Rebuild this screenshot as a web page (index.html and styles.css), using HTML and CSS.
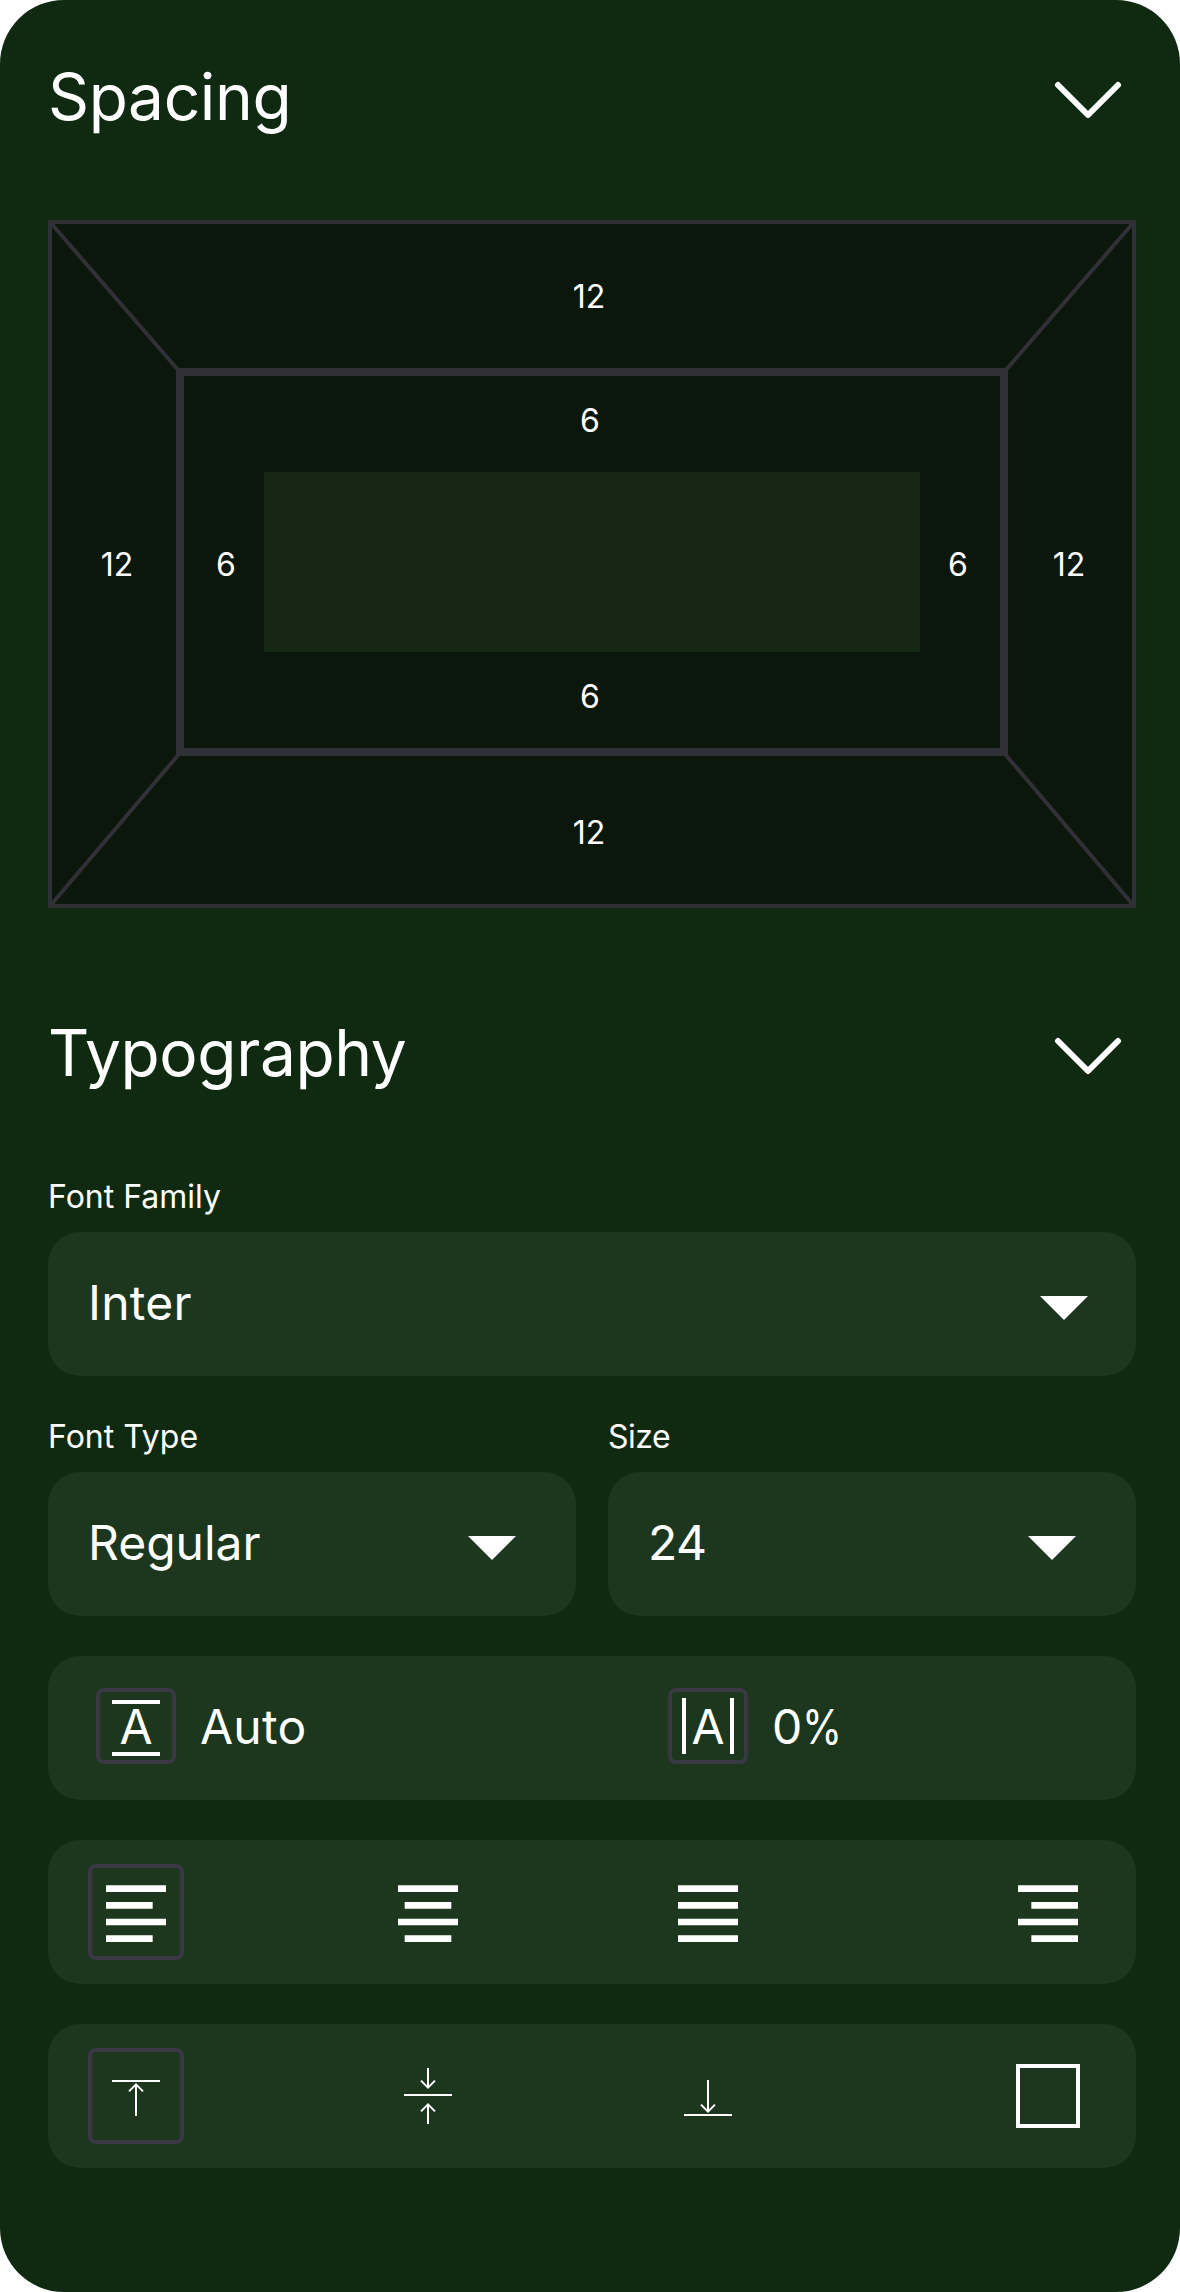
FILE: index.html
```html
<!DOCTYPE html>
<html lang="en">
<head>
<meta charset="utf-8">
<title>Inspector</title>
<link rel="stylesheet" href="styles.css">
</head>
<body>
<main class="panel">
  <section class="section">
    <header class="section-head">
      <h2 class="title">Spacing</h2>
      <svg class="chevron" viewBox="0 0 68 38"><path d="M4 4 34 34 64 4"/></svg>
    </header>
    <div class="margin-box">
      <svg class="bevel" viewBox="0 0 1088 688"><path d="M2 2 131 151M1086 2 957 151M2 686 131 534M1086 686 957 534"/></svg>
      <span class="num m-top">12</span>
      <span class="num m-left">12</span>
      <div class="padding-box">
        <span class="num p-top">6</span>
        <span class="num p-left">6</span>
        <div class="content-box"></div>
        <span class="num p-right">6</span>
        <span class="num p-bottom">6</span>
      </div>
      <span class="num m-right">12</span>
      <span class="num m-bottom">12</span>
    </div>
  </section>

  <section class="section typography">
    <header class="section-head">
      <h2 class="title">Typography</h2>
      <svg class="chevron" viewBox="0 0 68 38"><path d="M4 4 34 34 64 4"/></svg>
    </header>
    <div class="fields">
      <div class="group">
        <span class="label">Font Family</span>
        <div class="field field-wide"><span class="value loose">Inter</span><svg class="caret" viewBox="0 0 48 24"><path d="M0 0H48L24 24Z"/></svg></div>
      </div>
      <div class="pair">
        <div class="group">
          <span class="label">Font Type</span>
          <div class="field"><span class="value">Regular</span><svg class="caret" viewBox="0 0 48 24"><path d="M0 0H48L24 24Z"/></svg></div>
        </div>
        <div class="group">
          <span class="label tight">Size</span>
          <div class="field"><span class="value tight">24</span><svg class="caret" viewBox="0 0 48 24"><path d="M0 0H48L24 24Z"/></svg></div>
        </div>
      </div>
      <div class="bar metrics">
        <div class="metric">
          <span class="badge line-height"><span class="value">A</span></span>
          <span class="value loose">Auto</span>
        </div>
        <div class="metric">
          <span class="badge tracking"><span class="value">A</span></span>
          <span class="value tight">0<span class="percent">%</span></span>
        </div>
      </div>
      <div class="bar tools">
        <span class="tool selected"><svg class="align-icon" viewBox="0 0 18 18"><path d="M0 1H18v2H0zM0 6H14v2H0zM0 11H18v2H0zM0 16H14v2H0z"/></svg></span>
        <span class="tool"><svg class="align-icon" viewBox="0 0 18 18"><path d="M0 1H18v2H0zM2 6H16v2H2zM0 11H18v2H0zM2 16H16v2H2z"/></svg></span>
        <span class="tool"><svg class="align-icon" viewBox="0 0 18 18"><path d="M0 1H18v2H0zM0 6H18v2H0zM0 11H18v2H0zM0 16H18v2H0z"/></svg></span>
        <span class="tool"><svg class="align-icon" viewBox="0 0 18 18"><path d="M0 1H18v2H0zM4 6H18v2H4zM0 11H18v2H0zM4 16H18v2H4z"/></svg></span>
      </div>
      <div class="bar tools">
        <span class="tool selected"><svg class="arrow-icon" viewBox="0 0 48 56"><path d="M0 13H48M24 48V17M17 23.4 24 16.4 31 23.4"/></svg></span>
        <span class="tool"><svg class="arrow-icon" viewBox="0 0 48 56"><path d="M0 27H48M24 0V19M17 12.6 24 19.6 31 12.6M24 56V37M17 43.4 24 36.4 31 43.4"/></svg></span>
        <span class="tool"><svg class="arrow-icon" viewBox="0 0 48 56"><path d="M0 47H48M24 12V43M17 36.6 24 43.6 31 36.6"/></svg></span>
        <span class="tool"><span class="square"></span></span>
      </div>
    </div>
  </section>
</main>
</body>
</html>
```
FILE: styles.css
```css
* { box-sizing: border-box; }
body {
  margin: 0;
  background: #fff;
  color: #fff;
  font-family: Inter, "Liberation Sans", sans-serif;
}
svg { display: block; fill: none; stroke: none; }
.panel {
  height: 2292px;
  padding: 58px 44px 0 48px;
  border-radius: 64px;
  background: #0f2a10;
}
.section-head {
  display: flex;
  justify-content: space-between;
  align-items: flex-start;
  height: 78px;
  padding-right: 14px;
}
.title {
  margin: 0;
  font-size: 64px;
  font-weight: 400;
  line-height: 78px;
  letter-spacing: -0.38px;
}
.chevron {
  width: 68px;
  height: 38px;
  margin-top: 23px;
  stroke: #fff;
  stroke-width: 6;
  stroke-linecap: round;
  stroke-linejoin: round;
}

/* Box model */
.margin-box {
  display: grid;
  grid-template-columns: 124px 832px 124px;
  grid-template-rows: 144px 388px 148px;
  position: relative;
  height: 688px;
  margin-top: 84px;
  border: 4px solid #303036;
  background: #0c170c;
}
.bevel {
  position: absolute;
  inset: -4px;
  stroke: #303036;
  stroke-width: 4;
}
.num {
  place-self: center;
  font-size: 32px;
  line-height: 40px;
}
.m-top, .m-bottom { grid-column: 1 / 4; }
.m-top { margin: 2px 6px 0 0; }
.m-bottom { margin: 6px 6px 0 0; }
.m-left { margin: 6px 0 0 6px; }
.m-right { margin: 6px 2px 0 0; }
.padding-box {
  display: grid;
  grid-template-columns: 80px 656px 80px;
  grid-template-rows: 96px 180px 96px;
  position: relative;
  border: 8px solid #303036;
  background: #0c170c;
}
.p-top, .p-bottom { grid-column: 1 / 4; margin: 0 4px 6px 0; }
.p-left { margin: 6px 0 0 4px; }
.p-right { margin: 6px 4px 0 0; }
.content-box { background: #172716; }

/* Typography */
.typography { margin-top: 106px; }
.fields {
  display: flex;
  flex-direction: column;
  gap: 40px;
  margin-top: 84px;
}
.group { display: flex; flex-direction: column; }
.label {
  height: 56px;
  padding-top: 1px;
  font-size: 32px;
  line-height: 39px;
}
.pair { display: grid; grid-template-columns: 1fr 1fr; gap: 32px; }
.field, .bar {
  display: flex;
  align-items: center;
  height: 144px;
  border-radius: 32px;
  background: #1c371e;
}
.field { justify-content: space-between; padding: 0 60px 2px 40px; }
.field-wide { padding-right: 48px; }
.caret { width: 48px; height: 24px; margin-top: 10px; fill: #fff; }
.value { font-size: 48px; line-height: 58px; }
.loose { letter-spacing: 0.25px; }
.tight { letter-spacing: -0.5px; }
.percent {
  display: inline-block;
  transform: scaleX(0.85);
  transform-origin: left;
}
.metrics { padding: 0 0 4px 48px; }
.metric { display: flex; align-items: center; gap: 24px; width: 572px; }
.metric + .metric { width: auto; }
.metric > .value { padding-top: 2px; }
.badge {
  display: flex;
  justify-content: center;
  align-items: center;
  width: 80px;
  height: 76px;
  border: 4px solid #3a3843;
  border-radius: 8px;
}
.line-height .value {
  width: 48px;
  height: 56px;
  margin-top: 4px;
  line-height: 45px;
  border: solid #fff;
  border-width: 4px 0;
  text-align: center;
}
.tracking .value {
  width: 52px;
  height: 56px;
  line-height: 57px;
  border: solid #fff;
  border-width: 0 4px;
  text-align: center;
}
.tools { padding-left: 40px; gap: 196px; }
.tool {
  display: flex;
  justify-content: center;
  align-items: center;
  width: 96px;
  height: 96px;
}
.selected { border: 4px solid #3a3843; border-radius: 8px; }
.align-icon { width: 60px; height: 60px; fill: #fff; }
.arrow-icon { width: 48px; height: 56px; stroke: #fff; stroke-width: 2; }
.tool:nth-child(3) { margin-left: -12px; }
.tool:nth-child(4) { margin-left: 48px; }
.square { width: 64px; height: 64px; border: 4px solid #fff; }
```
